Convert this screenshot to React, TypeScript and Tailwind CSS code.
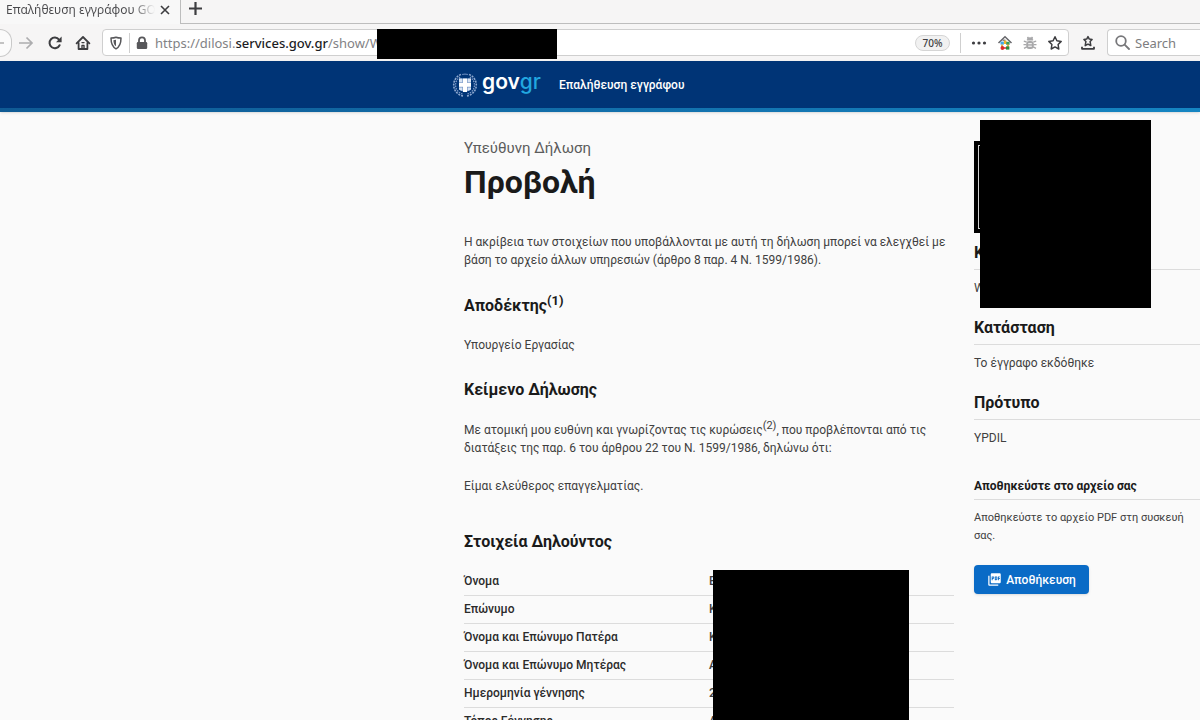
import React, { useState } from 'react';

interface Campo {
    label: string;
    value: string;
}

const campos: Campo[] = [
    { label: 'Όνομα', value: 'Ε' },
    { label: 'Επώνυμο', value: 'Κ' },
    { label: 'Όνομα και Επώνυμο Πατέρα', value: 'Κ' },
    { label: 'Όνομα και Επώνυμο Μητέρας', value: 'Α' },
    { label: 'Ημερομηνία γέννησης', value: '2' },
    { label: 'Τόπος Γέννησης', value: 'Α' },
];

const ReloadIcon = () => (
    <svg width="16" height="16" viewBox="0 0 16 16" fill="none" stroke="#3d3d40" strokeWidth="2">
        <path d="M12.6 10.2A5.3 5.3 0 1 1 12 4.6" strokeLinecap="round" />
        <path d="M14.6 1.6v5.6H9z" fill="#3d3d40" stroke="none" />
    </svg>
);

const HomeIcon = () => (
    <svg width="16" height="16" viewBox="0 0 16 16" fill="none" stroke="#3d3d40" strokeWidth="1.8" strokeLinecap="round" strokeLinejoin="round">
        <path d="M1.6 8.4 8 2l6.4 6.4" />
        <path d="M3.6 8v6h8.8V8" />
        <path d="M7 14v-3.6h2V14M7 7.6h2" strokeWidth="1.4" />
    </svg>
);

const ShieldIcon = () => (
    <svg width="14" height="14" viewBox="0 0 14 14" fill="none" stroke="#58585b" strokeWidth="1.5">
        <path d="M7 1.2c1.6.6 3.3.8 5 .8 0 5-.8 8.6-5 10.8C2.8 10.6 2 7 2 2c1.7 0 3.4-.2 5-.8z" strokeLinejoin="round" />
        <path d="M7 3.7v6.6C5 8.8 4.5 6.8 4.4 4.2 5.3 4.2 6.2 4 7 3.7z" fill="#58585b" stroke="none" />
    </svg>
);

const LockIcon = () => (
    <svg width="12" height="14" viewBox="0 0 12 14" fill="none">
        <path d="M3 6.5V4.3a3 3 0 0 1 6 0v2.2" stroke="#58585b" strokeWidth="1.8" />
        <rect x="0.8" y="6" width="10.4" height="7" rx="1.2" fill="#58585b" />
    </svg>
);

const ColorHouseIcon = () => (
    <svg width="16" height="16" viewBox="0 0 16 16" fill="none">
        <path d="M1.5 8 8 1.8 14.5 8" stroke="#66666a" strokeWidth="1.5" />
        <path d="M5.5 5.2h3" stroke="#66666a" strokeWidth="1.2" />
        <rect x="3.5" y="6.6" width="3.4" height="3" fill="#3fa9e8" />
        <rect x="6.9" y="5.6" width="2.6" height="3.4" fill="#f0b429" />
        <rect x="9.2" y="6.8" width="3.4" height="3" fill="#3b9c57" />
        <path d="M5 9.5v3M11 9.5v3" stroke="#e0a030" strokeWidth="1.6" />
        <circle cx="5.4" cy="13" r="1.9" fill="#d92b2b" />
        <path d="M6 13h4" stroke="#d92b2b" strokeWidth="1.5" />
        <rect x="9" y="11.4" width="3.4" height="3.2" fill="#2e8b3d" />
    </svg>
);

const BugIcon = () => (
    <svg width="14" height="14" viewBox="0 0 14 14" fill="none" stroke="#a8a8aa">
        <path d="M4.5 1 5.8 3M9.5 1 8.2 3" strokeWidth="1.4" />
        <path d="M4 4.2a3 2.8 0 0 1 6 0z" fill="#a8a8aa" strokeWidth="0.5" />
        <rect x="3.2" y="5" width="7.6" height="8" rx="3" fill="#a8a8aa" stroke="none" />
        <path d="M.8 5.2 3.6 6M13.2 5.2 10.4 6M.5 8.6h3M13.5 8.6h-3M1 12.4l2.8-1.5M13 12.4l-2.8-1.5" strokeWidth="1.4" />
        <path d="M5.2 7.7h3.6M5.2 10.2h3.6" stroke="#fff" strokeWidth="1" />
    </svg>
);

const StarIcon = () => (
    <svg width="16" height="16" viewBox="0 0 16 16" fill="none" stroke="#3d3d40" strokeWidth="1.5" strokeLinejoin="round">
        <path d="m8 1.8 1.9 4 4.3.6-3.1 3.1.7 4.5L8 11.9 4.2 14l.7-4.5L1.8 6.4l4.3-.6z" />
    </svg>
);

const LibraryStarIcon = () => (
    <svg width="14" height="16" viewBox="0 0 14 16" fill="none" stroke="#3d3d40" strokeWidth="1.5" strokeLinejoin="round">
        <path d="m7 1.6 1.3 2.5 2.8.4-2 2 .7 4.1L7 9.1l-2.8 1.5.7-4.1-2-2 2.8-.4z" />
        <path d="M1 11.8v2h12v-2" strokeWidth="1.8" />
    </svg>
);

const SearchIcon = () => (
    <svg width="15" height="15" viewBox="0 0 15 15" fill="none" stroke="#77777a" strokeWidth="1.8" className="shrink-0">
        <circle cx="6" cy="6" r="4.8" />
        <path d="m9.6 9.6 4.4 4.4" strokeLinecap="round" />
    </svg>
);

// laurel wreath around the cross shield
const Emblem = () => (
    <svg width="26" height="26" viewBox="0 0 26 26" fill="none">
        <path d="M11 24A11.2 11.2 0 0 1 9.5 2.3M15 24A11.2 11.2 0 0 0 16.5 2.3" stroke="#8fa9d0" strokeWidth="1.6" strokeDasharray="2 1" />
        <path d="M10.5 22A9.3 9.3 0 0 1 8.5 4.8M15.5 22A9.3 9.3 0 0 0 17.5 4.8" stroke="#7e9bc8" strokeWidth="1.2" strokeDasharray="1.5 1" />
        <path d="M10 2.5a11 11 0 0 1 6 0" stroke="#5f82b8" strokeWidth="1.2" />
        <path d="M7 6.5h12v10c0 2-2 2.6-6 3.5-4-.9-6-1.5-6-3.5z" fill="#6c8fc4" />
        <path d="M11 6.5h4V20h-4z" fill="#fff" />
        <path d="M7 10.8h12v4H7z" fill="#fff" />
        <path d="M7 6.5h3.4v3.7H7zM15.600 6.500H19v3.700h-3.400zM7 15.400h3.400v3.600L7 17.500zM15.600 15.400H19v2.100l-3.400 1.500z" fill="#d7e3f3" />
    </svg>
);

const PdfIcon = () => (
    <svg width="15" height="15" viewBox="0 0 24 24" fill="#fff">
        <path d="M20 2H8c-1.1 0-2 .9-2 2v12c0 1.1.9 2 2 2h12c1.1 0 2-.9 2-2V4c0-1.1-.9-2-2-2zm-8.5 7.5c0 .83-.67 1.5-1.5 1.5H9v2H7.5V7H10c.83 0 1.5.67 1.5 1.5v1zm5 2c0 .83-.67 1.5-1.5 1.5h-2.5V7H15c.83 0 1.5.67 1.5 1.5v3zm4-3H19v1h1.5V11H19v2h-1.5V7h3v1.5zM9 9.5h1v-1H9v1zM4 6H2v14c0 1.1.9 2 2 2h14v-2H4V6zm10 5.5h1v-3h-1v3z" />
    </svg>
);

function BrowserBar() {
    const [busca, setBusca] = useState('');

    return (
        <div className="shrink-0 bg-[#f6f5f5] font-['Noto_Sans',sans-serif] text-[#3d3d40]">
            <div className="flex h-6">
                <div className="flex w-[181px] items-center border-r border-[#bdbdbd] bg-[#f8f8f8] pb-1 pl-[6px]">
                    <span className="w-[149px] overflow-hidden whitespace-nowrap bg-linear-to-r from-[#4a4a4d] from-85% to-transparent bg-clip-text text-[12px] leading-5 text-transparent">
                        Επαλήθευση εγγράφου GO
                    </span>
                    <button type="button" aria-label="Close tab" className="ml-[5px]">
                        <svg width="10" height="10" viewBox="0 0 10 10" stroke="#3d3d40" strokeWidth="1.6"><path d="m1 1 8 8M9 1 1 9" /></svg>
                    </button>
                </div>
                <div className="flex flex-1 items-center border-b border-[#bdbdbd] pb-[6px] pl-2">
                    <button type="button" aria-label="New tab">
                        <svg width="13" height="13" viewBox="0 0 13 13" stroke="#3d3d40" strokeWidth="2.2"><path d="M6.5 0v13M0 6.5h13" /></svg>
                    </button>
                </div>
            </div>
            <div className="flex h-[37px] items-center">
                <button type="button" aria-label="Back" className="h-7 w-3 rounded-r-full border border-l-0 border-[#c9c9c9] bg-[#fbfbfb]">
                    <svg width="5" height="14" viewBox="0 0 5 14" stroke="#b5b5b5" strokeWidth="1.6"><path d="M0 7h4" /></svg>
                </button>
                <button type="button" aria-label="Forward" className="ml-[6px]">
                    <svg width="16" height="14" viewBox="0 0 16 14" fill="none" stroke="#adadaf" strokeWidth="1.7"><path d="M1 7h13M8.5 1.5 14 7l-5.5 5.5" /></svg>
                </button>
                <button type="button" aria-label="Reload" className="ml-[13px]"><ReloadIcon /></button>
                <button type="button" aria-label="Home" className="ml-3"><HomeIcon /></button>
                <div className="relative ml-[11px] flex h-[27px] flex-1 items-center rounded-sm border border-[#cfcfcf] bg-white pl-[6px] pr-[5px]">
                    <ShieldIcon />
                    <span className="mx-[6px] h-5 w-px bg-[#cfcfcf]" />
                    <LockIcon />
                    <div role="textbox" aria-label="Address" className="ml-[7px] flex-1 whitespace-nowrap text-[13px] leading-5 text-[#828285]">
                        https://dilosi.<span className="font-medium text-[#1c1c1f]">services.gov.gr</span>/show/W
                    </div>
                    <div className="absolute -top-px left-[274px] h-[30px] w-[180px] bg-black" />
                    <button type="button" className="h-4 w-[35px] rounded-full border border-[#d5d5d5] bg-[#f1f1f1] text-[10px] leading-[14px] font-medium">70%</button>
                    <span className="ml-[10px] h-5 w-px bg-[#cfcfcf]" />
                    <button type="button" aria-label="Page actions" className="ml-[10px]">
                        <svg width="16" height="4" viewBox="0 0 16 4" fill="#3d3d40"><circle cx="2.5" cy="2" r="1.6" /><circle cx="8" cy="2" r="1.6" /><circle cx="13.5" cy="2" r="1.6" /></svg>
                    </button>
                    <button type="button" aria-label="Extension" className="ml-[10px]"><ColorHouseIcon /></button>
                    <button type="button" aria-label="Debug" className="ml-[10px]"><BugIcon /></button>
                    <button type="button" aria-label="Bookmark" className="ml-[10px]"><StarIcon /></button>
                </div>
                <button type="button" aria-label="Bookmarks" className="mx-3"><LibraryStarIcon /></button>
                <label className="flex h-[27px] w-[93px] items-center rounded-l-sm border border-r-0 border-[#cfcfcf] bg-white pl-[7px]">
                    <SearchIcon />
                    <input
                        type="text"
                        aria-label="Search"
                        placeholder="Search"
                        value={busca}
                        onChange={(e) => setBusca(e.target.value)}
                        className="ml-[5px] w-full min-w-0 text-[13px] leading-5 outline-none placeholder:text-[#7d7d80]"
                    />
                </label>
            </div>
        </div>
    );
}

export default function App() {
    return (
        <div className="flex h-screen flex-col overflow-hidden bg-[#fafafa] font-['Roboto',sans-serif] text-[12px] leading-[18px] text-[#404040]">
            <BrowserBar />

            <header className="shrink-0 bg-[#003476] shadow-sm">
                <div className="flex h-[47px] items-center pl-[452px] text-white">
                    <Emblem />
                    <a href="#" className="ml-1 pb-[6px] font-['Inter',sans-serif] text-[21px] leading-8 font-semibold">
                        gov<span className="font-medium text-[#22a7e0]">gr</span>
                    </a>
                    <a href="#" className="ml-[18px] font-medium">Επαλήθευση εγγράφου</a>
                </div>
                <div className="h-1 bg-linear-to-r from-[#0f5a94] to-[#1585c2]" />
            </header>

            <div className="flex gap-5 pl-[464px]">
                <main className="w-[490px] shrink-0 pt-[26px]">
                    <p className="text-[15px] leading-5 text-[#5c5c5c]">Υπεύθυνη Δήλωση</p>
                    <h1 className="mt-1 text-[32px] leading-10 font-bold text-[#1a1a1a]">Προβολή</h1>
                    <p className="mt-[31px]">
                        Η ακρίβεια των στοιχείων που υποβάλλονται με αυτή τη δήλωση μπορεί να ελεγχθεί με βάση το αρχείο άλλων υπηρεσιών (άρθρο 8 παρ. 4 Ν. 1599/1986).
                    </p>

                    <h2 className="mt-[25px] text-[16px] leading-6 font-bold text-[#1a1a1a]">
                        Αποδέκτης<sup className="text-[13px]">(1)</sup>
                    </h2>
                    <p className="mt-[18px]">Υπουργείο Εργασίας</p>

                    <h2 className="mt-6 text-[16px] leading-6 font-bold text-[#1a1a1a]">Κείμενο Δήλωσης</h2>
                    <p className="mt-[19px]">
                        Με ατομική μου ευθύνη και γνωρίζοντας τις κυρώσεις<sup className="text-[11px]">(2)</sup>, που προβλέπονται από τις διατάξεις της παρ. 6 του άρθρου 22 του Ν. 1599/1986, δηλώνω ότι:
                    </p>
                    <p className="mt-5">Είμαι ελεύθερος επαγγελματίας.</p>

                    <h2 className="mt-[35px] text-[16px] leading-6 font-bold text-[#1a1a1a]">Στοιχεία Δηλούντος</h2>
                    <div className="relative mt-[13px]">
                        <table className="w-full table-fixed border-collapse text-left">
                            <tbody>
                                {campos.map((campo) => (
                                    <tr key={campo.label} className="h-7 border-b border-[#dcdcdc]">
                                        <th className="w-1/2 font-medium text-[#2b2b2b]">{campo.label}</th>
                                        <td className="font-medium">{campo.value}</td>
                                    </tr>
                                ))}
                            </tbody>
                        </table>
                        <div className="absolute top-[3px] left-[249px] h-full w-[196px] bg-black" />
                    </div>
                </main>

                <aside className="relative min-w-0 flex-1 pt-[29px]">
                    <div className="h-[92px] w-[92px] border-4 border-black bg-[#d0d0d0] p-px">
                        <div className="h-full bg-black" />
                    </div>
                    <h3 className="mt-2 border-b border-[#dcdcdc] pb-1 text-[16px] leading-6 font-bold text-[#1a1a1a]">Κωδικός</h3>
                    <p className="mt-[9px]">W</p>
                    <div className="absolute top-2 left-[6px] h-[188px] w-[171px] bg-black" />

                    <h3 className="mt-[19px] border-b border-[#dcdcdc] pb-1 text-[16px] leading-6 font-bold text-[#1a1a1a]">Κατάσταση</h3>
                    <p className="mt-[9px]">Το έγγραφο εκδόθηκε</p>

                    <h3 className="mt-[19px] border-b border-[#dcdcdc] pb-1 text-[16px] leading-6 font-bold text-[#1a1a1a]">Πρότυπο</h3>
                    <p className="mt-[9px]">YPDIL</p>

                    <h4 className="mt-[30px] border-b border-[#dcdcdc] pb-1 font-bold text-[#1a1a1a]">Αποθηκεύστε στο αρχείο σας</h4>
                    <p className="mt-[9px] text-[11px] leading-[18px]">Αποθηκεύστε το αρχείο PDF στη συσκευή σας.</p>
                    <button type="button" className="mt-5 flex h-[29px] w-[115px] items-center justify-center gap-1 rounded-sm bg-[#0a6bc6] font-medium text-white shadow-sm">
                        <PdfIcon /> Αποθήκευση
                    </button>
                </aside>
            </div>
        </div>
    );
}
